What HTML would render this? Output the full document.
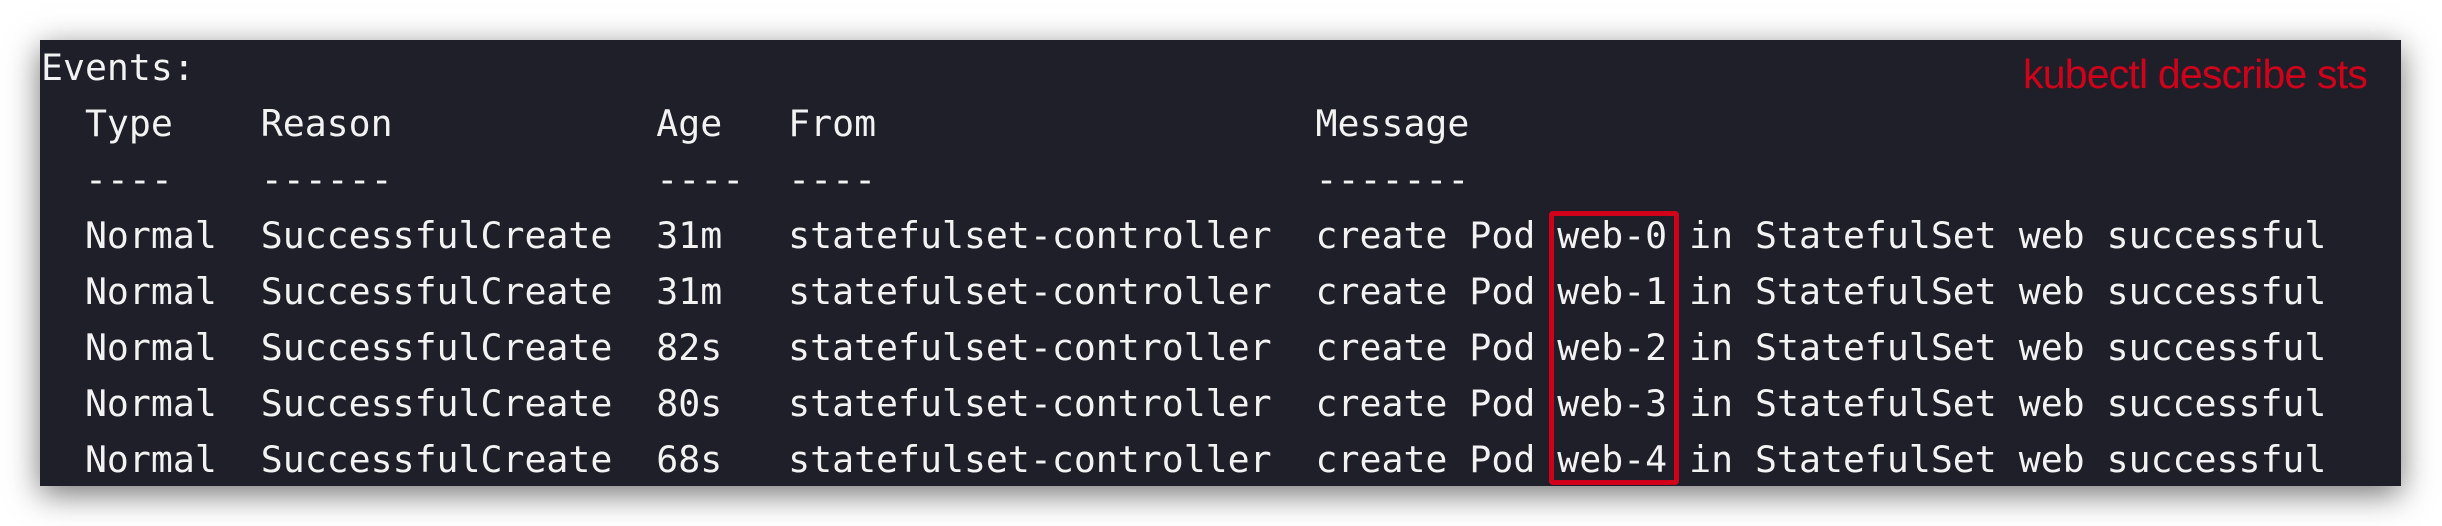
<!DOCTYPE html>
<html><head><meta charset="utf-8"><style>
html,body{margin:0;padding:0;background:#fff;width:2442px;height:526px;overflow:hidden;position:relative}
.term{position:absolute;left:40px;top:40px;width:2361px;height:446px;background:#1f1f29;box-shadow:0 8px 30px rgba(0,0,0,0.55)}
pre{position:absolute;left:1px;top:0;margin:0;font-family:"DejaVu Sans Mono","Liberation Mono",monospace;font-size:36.5px;line-height:56px;color:#f2f2f2;white-space:pre}
.box{position:absolute;left:1509px;top:171px;width:120px;height:264px;border:5px solid #d0021b;border-radius:4px}
.lbl{position:absolute;left:1983px;top:11px;font-family:"Liberation Sans",Arial,sans-serif;font-size:41px;color:#d0021b;letter-spacing:-0.8px;white-space:nowrap}
</style></head><body>
<div class="term">
<pre>Events:
  Type    Reason            Age   From                    Message
  ----    ------            ----  ----                    -------
  Normal  SuccessfulCreate  31m   statefulset-controller  create Pod web-0 in StatefulSet web successful
  Normal  SuccessfulCreate  31m   statefulset-controller  create Pod web-1 in StatefulSet web successful
  Normal  SuccessfulCreate  82s   statefulset-controller  create Pod web-2 in StatefulSet web successful
  Normal  SuccessfulCreate  80s   statefulset-controller  create Pod web-3 in StatefulSet web successful
  Normal  SuccessfulCreate  68s   statefulset-controller  create Pod web-4 in StatefulSet web successful</pre>
<div class="box"></div>
<div class="lbl">kubectl describe sts</div>
</div>
</body></html>
